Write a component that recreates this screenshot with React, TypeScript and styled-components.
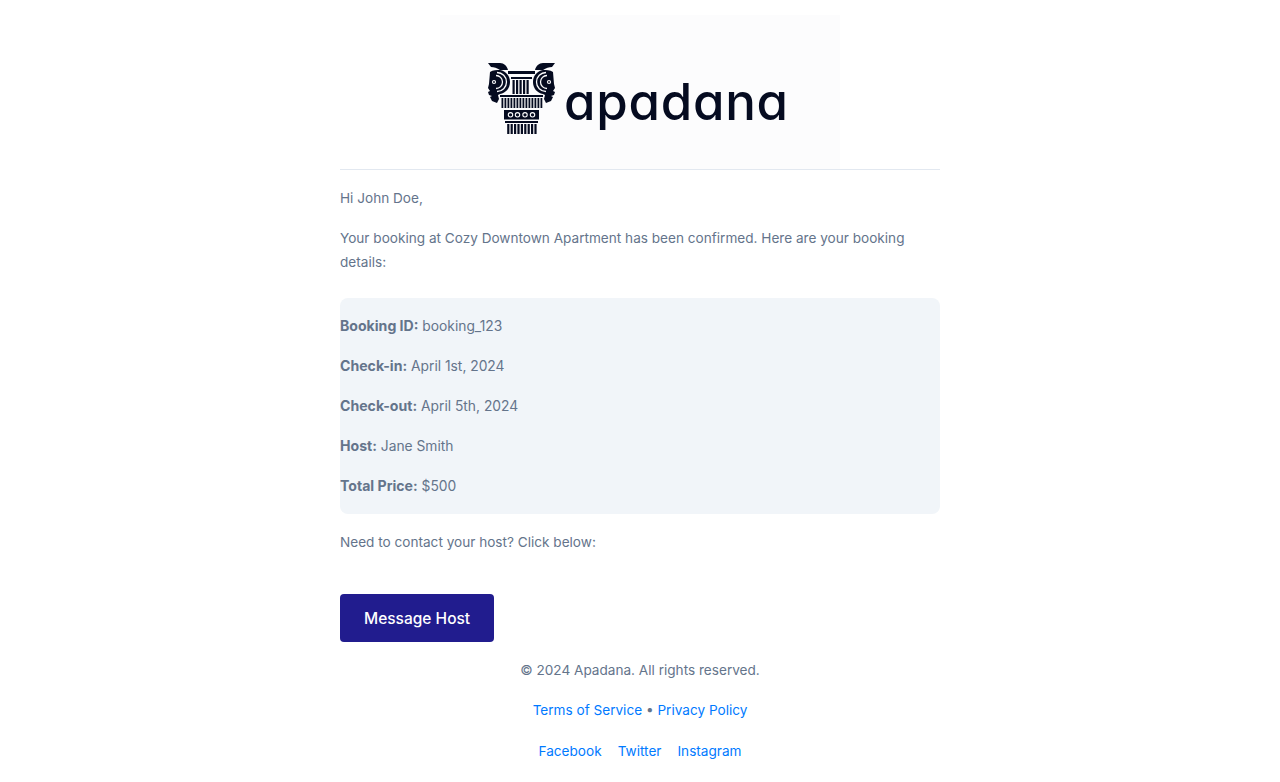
import React from "react";
import styled, { createGlobalStyle } from "styled-components";

const GlobalStyle = createGlobalStyle`
  body {
    margin: 0;
    background: #ffffff;
    font-family: Inter, "Liberation Sans", sans-serif;
  }
`;

const Page = styled.div`
  width: 600px;
  margin: 0 auto;
  padding-top: 15px;
  font-size: 14px;
  line-height: 24px;
  color: #64748b;
`;

const LogoBox = styled.div`
  width: 400px;
  height: 154px;
  margin: 0 auto;
  background: #fcfcfd;
  display: flex;
  align-items: flex-start;
  padding: 47px 0 0 46px;
  box-sizing: border-box;
`;

const LogoMark = styled.svg`
  width: 72px;
  height: 73px;
  flex: none;
  filter: blur(0.25px);
`;

const Wordmark = styled.span`
  margin: 2px 0 0 6px;
  font-size: 51px;
  line-height: 76px;
  font-weight: 500;
  color: #050b20;
  font-feature-settings: "cv11" 1;
  letter-spacing: 0.7px;
`;

const Divider = styled.hr`
  margin: 0 0 16px;
  border: none;
  border-top: 1px solid #e2e8f0;
`;

const Text = styled.p`
  margin: 0 0 16px;
  font-size: 13.6px;
`;

const Details = styled.div`
  margin: 24px 0 16px;
  padding: 16px 0;
  background: #f1f5f9;
  border-radius: 8px;
`;

const Row = styled.p`
  margin: 0 0 16px;
  font-size: 13.8px;
  &:last-child {
    margin-bottom: 0;
  }
`;

const Label = styled.strong`
  font-size: 14.1px;
`;

const ActionRow = styled.div`
  margin-top: 40px;
`;

const MessageButton = styled.a`
  display: inline-block;
  padding: 13px 24px 11px;
  background: #211c8e;
  border-radius: 4px;
  color: #ffffff;
  font-size: 15.5px;
  font-weight: 500;
  line-height: 24px;
`;

const Footer = styled.div`
  margin-top: 16px;
  text-align: center;
`;

const FootLink = styled.a`
  color: #007aff;
  text-decoration: none;
`;

const SocialRow = styled.div`
  display: flex;
  justify-content: center;
  gap: 16px;
  margin-top: 17px;
  font-size: 13.6px;
`;

const INK = "#050b20";
const PAPER = "#fcfcfd";

// one side of the column head, mirrored for the other side
const Volute = ({ mirror }: { mirror?: boolean }) => (
  <g transform={mirror ? "translate(1043 0) scale(-1 1)" : undefined}>
    <path fill={INK} d="M488 63h12c4 0 7 3 8 7h-8c-3-2-6-3-9-3z" />
    <path
      fill={INK}
      d="M490 72c3-2 7-2 10-2 6 1 10 6 10 12s-4 11-10 12l-2 1 1 4-2 4-5-2-2-4 2-1-3-1-1-3 2-1-2-3 1-4z"
    />
    <path d="M496 75.5a6.5 6.5 0 0 1 0 13" fill="none" stroke={PAPER} strokeWidth="1.3" />
    <path d="M497 72.5a9.5 9.5 0 0 1 0 19" fill="none" stroke={PAPER} strokeWidth="1.3" />
    <circle cx="494" cy="82" r="2.1" fill={PAPER} />
    <circle cx="494" cy="82" r="0.9" fill={INK} />
  </g>
);

const Logo = () => (
  <LogoMark viewBox="486 62 72 73" aria-hidden="true">
    <Volute />
    <Volute mirror />
    <g fill={INK}>
      <rect x="508" y="71" width="27" height="3" />
      <rect x="511" y="77" width="21" height="2" />
      {[512.5, 516, 519.5, 523, 526.5].map((x) => (
        <rect key={x} x={x} y="80" width="2.2" height="14" />
      ))}
      <rect x="500" y="95" width="43" height="2" />
      {Array.from({ length: 14 }, (_, i) => (
        <rect key={i} x={501.5 + i * 3} y="98" width="1.8" height="10" />
      ))}
      <rect x="504" y="110" width="35" height="9.5" />
      <rect x="505" y="121" width="33" height="2" />
      {Array.from({ length: 9 }, (_, i) => (
        <rect key={i} x={507.2 + i * 3.4} y="124" width="2.2" height="10" />
      ))}
    </g>
    {[510.5, 517.5, 525, 532.5].map((cx) => (
      <circle key={cx} cx={cx} cy="114.8" r="2.2" fill={INK} stroke={PAPER} strokeWidth="1.1" />
    ))}
  </LogoMark>
);

const App: React.FC = () => (
  <>
    <GlobalStyle />
    <Page>
      <LogoBox>
        <Logo />
        <Wordmark>apadana</Wordmark>
      </LogoBox>
      <Divider />
      <Text>Hi John Doe,</Text>
      <Text>Your booking at Cozy Downtown Apartment has been confirmed. Here are your booking details:</Text>
      <Details>
        <Row><Label>Booking ID:</Label> booking_123</Row>
        <Row><Label>Check-in:</Label> April 1st, 2024</Row>
        <Row><Label>Check-out:</Label> April 5th, 2024</Row>
        <Row><Label>Host:</Label> Jane Smith</Row>
        <Row><Label>Total Price:</Label> $500</Row>
      </Details>
      <Text>Need to contact your host? Click below:</Text>
      <ActionRow>
        <MessageButton>Message Host</MessageButton>
      </ActionRow>
      <Footer>
        <Text>© 2024 Apadana. All rights reserved.</Text>
        <Text>
          <FootLink>Terms of Service</FootLink> • <FootLink>Privacy Policy</FootLink>
        </Text>
        <SocialRow>
          <FootLink>Facebook</FootLink>
          <FootLink>Twitter</FootLink>
          <FootLink>Instagram</FootLink>
        </SocialRow>
      </Footer>
    </Page>
  </>
);

export default App;
